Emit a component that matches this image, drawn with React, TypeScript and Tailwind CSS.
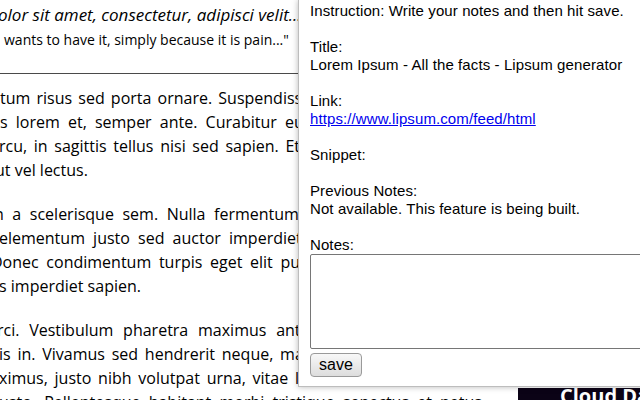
import React from "react";

const paragraphs = [
  [
    { text: "tum risus sed porta ornare. Suspendisse", cls: "ml-0 [word-spacing:2px]" },
    { text: "s lorem et, semper ante. Curabitur eu", cls: "ml-0 [word-spacing:4px]" },
    { text: "rcu, in sagittis tellus nisi sed sapien. Et", cls: "-ml-[1px] [word-spacing:2.5px]" },
    { text: "ut vel lectus.", cls: "-ml-[5px]" },
  ],
  [
    { text: "n a scelerisque sem. Nulla fermentum eget", cls: "-ml-[6px] [word-spacing:4.4px]" },
    { text: "elementum justo sed auctor imperdiet", cls: "-ml-[1px] [word-spacing:4px]" },
    { text: "Donec condimentum turpis eget elit purus", cls: "-ml-[9px] [word-spacing:3.5px]" },
    { text: "s imperdiet sapien.", cls: "-ml-[1px]" },
  ],
  [
    { text: "rci. Vestibulum pharetra maximus ante", cls: "-ml-[3px] [word-spacing:5.6px]" },
    { text: "is in. Vivamus sed hendrerit neque, magna", cls: "-ml-[1px] [word-spacing:2.6px]" },
    { text: "ximus, justo nibh volutpat urna, vitae leo", cls: "-ml-[1px] [word-spacing:2.6px]" },
    { text: "usto. Pellentesque habitant morbi tristique senectus et netus", cls: "-ml-[1px] [word-spacing:4px]" },
  ],
];

const Page = () => (
  <div className="flex h-full font-['Open_Sans',sans-serif] text-black">
    <div className="w-[500px] shrink-0 overflow-hidden">
      <div className="pt-[3px] -ml-[2px] whitespace-nowrap text-[17px] italic leading-[24px]">
        olor sit amet, consectetur, adipisci velit...
      </div>
      <div className="mt-[3px] ml-[4px] whitespace-nowrap text-[14px] leading-[20px]">
        wants to have it, simply because it is pain..."
      </div>
      <div className="mt-[23px] h-px w-full bg-[#4a4a4a]"></div>
      <div className="mt-[12px] flex flex-col gap-[20px]">
        {paragraphs.map((lines, i) => (
          <div key={i} className="text-[16px] leading-[24px]">
            {lines.map((line) => (
              <div key={line.text} className={"whitespace-nowrap " + line.cls}>
                {line.text}
              </div>
            ))}
          </div>
        ))}
      </div>
    </div>
    <div className="flex-1 pl-[18px] pt-[388px]">
      <div className="h-[40px] overflow-hidden whitespace-nowrap bg-[#0b0316] pl-[42px] text-[20px] font-bold leading-[16px] text-white">
        Cloud Database
      </div>
    </div>
  </div>
);

const Popup = () => (
  <div className="absolute left-[298px] top-0 h-[387px] w-[360px] border-b border-l border-[#bdbdbd] bg-white pl-[11px] pt-[2px] font-['Liberation_Sans',Arial,sans-serif] text-[15px] leading-[18px] tracking-[0.1px] text-black shadow-[0_0_6px_rgba(0,0,0,0.28)]">
    <div>Instruction: Write your notes and then hit save.</div>
    <div className="mt-[18px]">Title:</div>
    <div>Lorem Ipsum - All the facts - Lipsum generator</div>
    <div className="mt-[18px]">Link:</div>
    <div>
      <a href="#" className="text-[#0000ee] underline">
        https://www.lipsum.com/feed/html
      </a>
    </div>
    <div className="mt-[18px]">Snippet:</div>
    <div className="mt-[18px]">Previous Notes:</div>
    <div>Not available. This feature is being built.</div>
    <div className="mt-[18px]">Notes:</div>
    <textarea className="block h-[95px] w-[345px] resize-none rounded-[2px] border border-[#767676] bg-white"></textarea>
    <button className="mt-[4px] block h-[24px] rounded-[4px] border border-[#9a9a9a] bg-gradient-to-b from-[#f8f8f8] to-[#dddddd] px-[8px] text-[16px] leading-[20px] tracking-normal text-black">
      save
    </button>
  </div>
);

export default function App() {
  return (
    <div className="relative h-[400px] w-[640px] overflow-hidden bg-white">
      <Page />
      <Popup />
    </div>
  );
}
